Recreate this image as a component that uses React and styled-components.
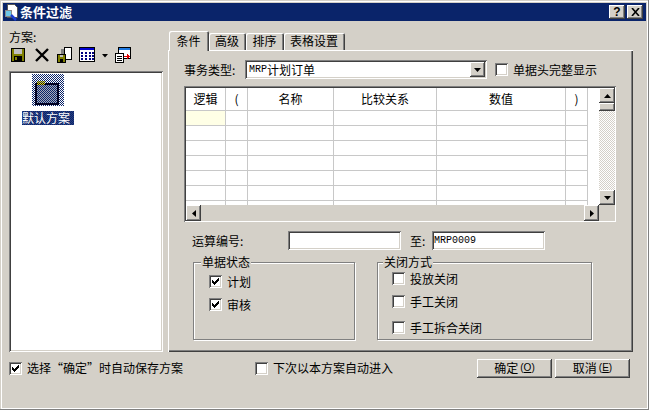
import React from "react";
import styled, { createGlobalStyle, css } from "styled-components";

const GlobalStyle = createGlobalStyle`
  html, body {
    margin: 0;
    padding: 0;
    background: #d4d0c8;
  }
  * {
    box-sizing: border-box;
  }
`;

const FACE = "#d4d0c8";
const CJK = `"Noto Sans CJK SC", "Liberation Sans", sans-serif`;

const raised = css`
  background: ${FACE};
  box-shadow: inset -1px -1px 0 #404040, inset 1px 1px 0 #fff,
    inset -2px -2px 0 #808080, inset 2px 2px 0 ${FACE};
`;

const sunken = css`
  box-shadow: inset 1px 1px 0 #808080, inset -1px -1px 0 #fff,
    inset 2px 2px 0 #404040, inset -2px -2px 0 ${FACE};
`;

const Win = styled.div`
  width: 649px;
  height: 410px;
  padding: 3px;
  display: flex;
  flex-direction: column;
  background: ${FACE};
  color: #000;
  font: 12px/14px ${CJK};
  overflow: hidden;
  box-shadow: inset -1px -1px 0 #808080, inset 1px 1px 0 ${FACE},
    inset -2px -2px 0 #fff, inset 2px 2px 0 #fff;
`;

const TitleBar = styled.div`
  height: 18px;
  flex: none;
  display: flex;
  align-items: center;
  background: #0a246a;
  color: #fff;
  padding-right: 3px;
`;

const TitleText = styled.span`
  font-size: 13px;
  font-weight: 700;
  flex: 1;
`;

const TitleButton = styled.div`
  ${raised}
  width: 16px;
  height: 14px;
  margin-left: ${(p) => p.$gap || 0}px;
  color: #000;
  display: flex;
  align-items: center;
  justify-content: center;
  font: 700 12px/14px "Liberation Sans", sans-serif;
`;

const Body = styled.div`
  display: flex;
  gap: 5px;
  padding-left: 6px;
`;

const SideColumn = styled.div`
  width: 154px;
  padding-top: 9px;
  display: flex;
  flex-direction: column;
`;

const SideLabel = styled.div`
  height: 14px;
`;

const Toolbar = styled.div`
  height: 16px;
  margin-top: 3px;
  padding-left: 1px;
  display: flex;
  align-items: center;
  gap: 7px;
`;

const SchemeList = styled.div`
  ${sunken}
  height: 281px;
  margin-top: 8px;
  background: #fff;
  padding: 3px 0 0 13px;
`;

const SchemeItem = styled.div`
  width: 52px;
  display: flex;
  flex-direction: column;
  align-items: center;
  gap: 5px;
`;

const SchemeName = styled.div`
  width: 52px;
  height: 14px;
  color: #fff;
  background-color: #0a246a;
  background-image: conic-gradient(#0a246a 25%, #2a4080 0 50%, #0a246a 0 75%, #2a4080 0);
  background-size: 2px 2px;
`;

const MainColumn = styled.div`
  width: 465px;
  padding-top: 9px;
`;

const TabStrip = styled.div`
  height: 20px;
  padding-left: 1px;
  display: flex;
  align-items: flex-end;
`;

const Tab = styled.div`
  height: ${(p) => (p.$active ? 20 : 17)}px;
  width: ${(p) => p.$w}px;
  margin-bottom: ${(p) => (p.$active ? -1 : 0)}px;
  position: relative;
  z-index: ${(p) => (p.$active ? 2 : 0)};
  background: ${FACE};
  border-radius: 2px 2px 0 0;
  text-align: center;
  padding: ${(p) => (p.$active ? 3 : 1)}px 1px 0 0;
  box-shadow: inset 1px 1px 0 #fff, inset -1px 0 0 #404040, inset -2px 0 0 #808080;
`;

const TabPanel = styled.div`
  height: 302px;
  padding: 10px 0 0 16px;
  box-shadow: inset 1px 1px 0 #fff, inset -1px -1px 0 #404040, inset -2px -2px 0 #808080;
`;

const TypeRow = styled.div`
  height: 19px;
  display: flex;
  align-items: center;
`;

const FieldLabel = styled.div`
  width: ${(p) => p.$w}px;
  flex: none;
  margin-left: ${(p) => p.$ml || 0}px;
`;

const Field = styled.div`
  ${sunken}
  width: ${(p) => p.$w}px;
  height: 19px;
  flex: none;
  background: #fff;
  padding: 2px 0 0 ${(p) => p.$pad || 2}px;
  line-height: 15px;
  display: flex;
`;

const Ascii = styled.span`
  font: 10px/15px "Liberation Mono", monospace;
`;

const ComboBox = styled(Field)`
  position: relative;
`;

const DropButton = styled.div`
  ${raised}
  position: absolute;
  right: 2px;
  top: 2px;
  width: 15px;
  height: 15px;
  display: flex;
  align-items: center;
  justify-content: center;
`;

const CheckRow = styled.label`
  display: flex;
  align-items: center;
  gap: 5px;
  height: 13px;
  margin-left: ${(p) => p.$ml || 0}px;
  margin-top: ${(p) => p.$mt || 0}px;
  white-space: nowrap;
`;

const CheckBox = styled.span`
  ${sunken}
  width: 13px;
  height: 13px;
  flex: none;
  background: #fff;
  display: flex;
  align-items: center;
  justify-content: center;
`;

const GridFrame = styled.div`
  width: 432px;
  height: 136px;
  margin-top: 7px;
  padding: 2px 1px 1px 2px;
  display: flex;
  flex-direction: column;
  box-shadow: inset 1px 1px 0 #808080, inset -1px -1px 0 #fff, inset 2px 2px 0 #404040;
`;

const GridTop = styled.div`
  height: 117px;
  display: flex;
`;

const GridCells = styled.div`
  flex: 1;
  background: #fff;
  overflow: hidden;
`;

const GridRow = styled.div`
  display: flex;
  height: ${(p) => (p.$head ? 23 : 15)}px;
`;

const GridCell = styled.div`
  width: ${(p) => p.$w}px;
  flex: none;
  text-align: center;
  line-height: 22px;
  border-right: 1px solid #c8c8c8;
  border-bottom: 1px solid #c8c8c8;
  background: ${(p) => (p.$current ? "#ffffe6" : "#fff")};
`;

const VScroll = styled.div`
  width: 16px;
  flex: none;
  display: flex;
  flex-direction: column;
`;

const ScrollButton = styled.div`
  ${raised}
  flex: none;
  width: ${(p) => p.$w}px;
  height: ${(p) => p.$h}px;
  display: flex;
  align-items: center;
  justify-content: center;
`;

const ScrollCorner = styled.div`
  flex: none;
  width: 16px;
  height: 16px;
  background: ${FACE};
`;

const ScrollTrack = styled.div`
  flex: 1;
  background-image: conic-gradient(#fff 25%, ${FACE} 0 50%, #fff 0 75%, ${FACE} 0);
  background-size: 2px 2px;
`;

const HScroll = styled.div`
  height: 16px;
  display: flex;
`;

const HThumb = styled.div`
  flex: 1;
  background: ${FACE};
`;

const NumberRow = styled.div`
  height: 19px;
  margin-top: 9px;
  padding-left: 8px;
  display: flex;
  align-items: center;
`;

const GroupRow = styled.div`
  margin-top: 12px;
  padding-left: 9px;
  display: flex;
  gap: 22px;
`;

const Group = styled.div`
  position: relative;
  width: ${(p) => p.$w}px;
  height: 78px;
  padding: ${(p) => p.$top}px 0 0 ${(p) => p.$inset}px;
  border: 1px solid #808080;
  box-shadow: 1px 1px 0 #fff, inset 1px 1px 0 #fff;
`;

const Legend = styled.div`
  position: absolute;
  left: ${(p) => p.$left}px;
  top: -8px;
  padding: 0 1px;
  background: ${FACE};
`;

const Footer = styled.div`
  height: 20px;
  margin-top: 6px;
  padding: 0 16px 0 6px;
  display: flex;
  align-items: center;
`;

const ActionButtons = styled.div`
  margin-left: auto;
  display: flex;
  gap: 3px;
`;

const ActionButton = styled.div`
  ${raised}
  width: 75px;
  height: 19px;
  display: flex;
  align-items: center;
  justify-content: center;
  gap: 2px;
`;

const Mnemonic = styled.span`
  font: 10px/14px "Liberation Sans", sans-serif;
`;

const Check = () => (
  <svg width="9" height="9" viewBox="0 0 9 9" shapeRendering="crispEdges">
    <path d="M1 3h1v1h1v1h1V4h1V3h1V2h1V1h1v3H7v1H6v1H5v1H4v1H3V7H2V6H1z" fill="#000" />
  </svg>
);

const Box = ({ checked }) => <CheckBox>{checked && <Check />}</CheckBox>;

const Arrow = ({ dir }) => {
  const shapes = {
    up: "M3.5 0 7 4H0z",
    down: "M0 0h7L3.5 4z",
    left: "M4 0v7L0 3.5z",
    right: "M0 0l4 3.5L0 7z",
  };
  const vertical = dir === "up" || dir === "down";
  return (
    <svg width={vertical ? 7 : 4} height={vertical ? 4 : 7} viewBox={vertical ? "0 0 7 4" : "0 0 4 7"}>
      <path d={shapes[dir]} fill="#000" />
    </svg>
  );
};

const TitleIcon = () => (
  <svg width="17" height="17" viewBox="0 0 17 17" shapeRendering="crispEdges" style={{ flex: "none" }}>
    <path d="M4 0h7l3 3v10H4z" fill="#fff" stroke="#555" />
    <rect x="2" y="6" width="6" height="6" fill="#6fc8e8" stroke="#8a8a8a" />
    <path d="M8 11l5 5" stroke="#1c3fd0" strokeWidth="2.5" shapeRendering="auto" />
  </svg>
);

const SaveIcon = () => (
  <svg width="16" height="16" viewBox="0 0 16 16" shapeRendering="crispEdges">
    <rect x="1" y="1" width="14" height="14" fill="#000" />
    <rect x="2" y="2" width="12" height="12" fill="#808000" />
    <rect x="4" y="2" width="8" height="5" fill="#c0c0c0" />
    <rect x="4" y="9" width="8" height="5" fill="#000" />
    <rect x="5" y="10" width="2" height="3" fill="#808000" />
  </svg>
);

const DeleteIcon = () => (
  <svg width="16" height="16" viewBox="0 0 16 16">
    <path d="M3 2l12 12M15 2L3 14" stroke="#000" strokeWidth="2.4" />
  </svg>
);

const CopyIcon = () => (
  <svg width="16" height="16" viewBox="0 0 16 16" shapeRendering="crispEdges">
    <rect x="8.5" y="0.5" width="7" height="12" fill="#fff" stroke="#000" />
    <rect x="5" y="2" width="3" height="5" fill="#808080" />
    <rect x="1" y="7" width="9" height="9" fill="#000" />
    <rect x="2" y="8" width="7" height="7" fill="#808000" />
    <rect x="4" y="8" width="3" height="2" fill="#c0c0c0" />
    <rect x="4" y="12" width="3" height="3" fill="#000" />
  </svg>
);

const TableIcon = () => (
  <svg width="16" height="16" viewBox="0 0 16 16" shapeRendering="crispEdges">
    <rect x="0" y="0" width="16" height="15" fill="#000" />
    <rect x="1" y="1" width="14" height="13" fill="#fff" />
    <rect x="1" y="1" width="14" height="2" fill="#0000d0" />
    {[5, 8, 11].map((y) =>
      [2, 6, 10, 13].map((x) => <rect key={`${x}-${y}`} x={x} y={y} width="2" height="2" fill="#000080" />)
    )}
  </svg>
);

const SmallArrow = () => (
  <svg width="6" height="4" viewBox="0 0 6 4" style={{ marginTop: 2 }}>
    <path d="M0 0h6L3 3.5z" fill="#000" />
  </svg>
);

const ExportIcon = () => (
  <svg width="16" height="16" viewBox="0 0 16 16" shapeRendering="crispEdges">
    <rect x="3.5" y="0.5" width="12" height="11" fill="#fff" stroke="#000" />
    <rect x="4" y="1" width="11" height="2" fill="#1e78e0" />
    <rect x="0.5" y="6.5" width="8" height="9" fill="#fff" stroke="#000" />
    <path d="M2 9h5v1H2zM2 11h5v1H2zM2 13h5v1H2z" fill="#000" />
    <path d="M9 9h3V7h1v1h1v1h1v1h-1v1h-1v1h-1v-2H9z" fill="#e00000" />
  </svg>
);

// selected icon: every second pixel is the highlight colour, the rest shows the icon
const schemePixel = (x, y) => {
  const inTab = x >= 5 && x <= 12 && y >= 7 && y <= 10;
  const inFrame = x >= 3 && x <= 26 && y >= 9 && y <= 30;
  const inFace = x >= 5 && x <= 24 && y >= 11 && y <= 28;
  if ((x + y) % 2 === 0) return inFrame && !inFace ? "#000020" : "#0a246a";
  if (inTab) return "#ffee00";
  if (inFace) return "#a8acb8";
  if (inFrame) return "#000020";
  return "#fff";
};

const PIXELS = Array.from({ length: 32 * 32 }, (_, i) => ({ x: i % 32, y: Math.floor(i / 32) }));

const SchemeIcon = () => (
  <svg width="32" height="32" viewBox="0 0 32 32" shapeRendering="crispEdges">
    {PIXELS.map(({ x, y }) => (
      <rect key={`${x}-${y}`} x={x} y={y} width="1" height="1" fill={schemePixel(x, y)} />
    ))}
  </svg>
);

const COLUMNS = [
  { w: 40, text: "逻辑" },
  { w: 22, text: "(" },
  { w: 86, text: "名称" },
  { w: 103, text: "比较关系" },
  { w: 129, text: "数值" },
  { w: 22, text: ")" },
];

const ROWS = [0, 1, 2, 3, 4, 5, 6];

const App = () => {
  return (
    <Win>
      <GlobalStyle />
      <TitleBar>
        <TitleIcon />
        <TitleText>条件过滤</TitleText>
        <TitleButton>?</TitleButton>
        <TitleButton $gap={2}>
          <svg width="9" height="8" viewBox="0 0 9 8">
            <path d="M1 0l7 8M8 0L1 8" stroke="#000" strokeWidth="1.6" />
          </svg>
        </TitleButton>
      </TitleBar>

      <Body>
        <SideColumn>
          <SideLabel>方案:</SideLabel>
          <Toolbar>
            <SaveIcon />
            <DeleteIcon />
            <CopyIcon />
            <TableIcon />
            <SmallArrow />
            <ExportIcon />
          </Toolbar>
          <SchemeList>
            <SchemeItem>
              <SchemeIcon />
              <SchemeName>默认方案</SchemeName>
            </SchemeItem>
          </SchemeList>
        </SideColumn>

        <MainColumn>
          <TabStrip>
            <Tab $active $w={40}>条件</Tab>
            <Tab $w={37}>高级</Tab>
            <Tab $w={38}>排序</Tab>
            <Tab $w={61}>表格设置</Tab>
          </TabStrip>
          <TabPanel>
            <TypeRow>
              <FieldLabel $w={61}>事务类型:</FieldLabel>
              <ComboBox $w={242} $pad={4}>
                <Ascii>MRP</Ascii>计划订单
                <DropButton>
                  <Arrow dir="down" />
                </DropButton>
              </ComboBox>
              <CheckRow $ml={8}>
                <Box />
                单据头完整显示
              </CheckRow>
            </TypeRow>

            <GridFrame>
              <GridTop>
                <GridCells>
                  <GridRow $head>
                    {COLUMNS.map((col) => (
                      <GridCell key={col.text} $w={col.w}>{col.text}</GridCell>
                    ))}
                  </GridRow>
                  {ROWS.map((row) => (
                    <GridRow key={row}>
                      {COLUMNS.map((col, i) => (
                        <GridCell key={col.text} $w={col.w} $current={row === 0 && i === 0} />
                      ))}
                    </GridRow>
                  ))}
                </GridCells>
                <VScroll>
                  <ScrollButton $w={16} $h={15}><Arrow dir="up" /></ScrollButton>
                  <ScrollButton $w={16} $h={8} />
                  <ScrollTrack />
                  <ScrollButton $w={16} $h={15}><Arrow dir="down" /></ScrollButton>
                </VScroll>
              </GridTop>
              <HScroll>
                <ScrollButton $w={15} $h={16}><Arrow dir="left" /></ScrollButton>
                <HThumb />
                <ScrollButton $w={15} $h={16}><Arrow dir="right" /></ScrollButton>
                <ScrollCorner />
              </HScroll>
            </GridFrame>

            <NumberRow>
              <FieldLabel $w={96}>运算编号:</FieldLabel>
              <Field $w={113} />
              <FieldLabel $w={22} $ml={9}>至:</FieldLabel>
              <Field $w={113}>
                <Ascii>MRP0009</Ascii>
              </Field>
            </NumberRow>

            <GroupRow>
              <Group $w={162} $top={12} $inset={15}>
                <Legend $left={7}>单据状态</Legend>
                <CheckRow><Box checked />计划</CheckRow>
                <CheckRow $mt={10}><Box checked />审核</CheckRow>
              </Group>
              <Group $w={215} $top={9} $inset={14}>
                <Legend $left={5}>关闭方式</Legend>
                <CheckRow><Box />投放关闭</CheckRow>
                <CheckRow $mt={10}><Box />手工关闭</CheckRow>
                <CheckRow $mt={13}><Box />手工拆合关闭</CheckRow>
              </Group>
            </GroupRow>
          </TabPanel>
        </MainColumn>
      </Body>

      <Footer>
        <CheckRow>
          <Box checked />
          选择“确定”时自动保存方案
        </CheckRow>
        <CheckRow $ml={72}>
          <Box />
          下次以本方案自动进入
        </CheckRow>
        <ActionButtons>
          <ActionButton>确定<Mnemonic>(<u>O</u>)</Mnemonic></ActionButton>
          <ActionButton>取消<Mnemonic>(<u>E</u>)</Mnemonic></ActionButton>
        </ActionButtons>
      </Footer>
    </Win>
  );
};

export default App;
